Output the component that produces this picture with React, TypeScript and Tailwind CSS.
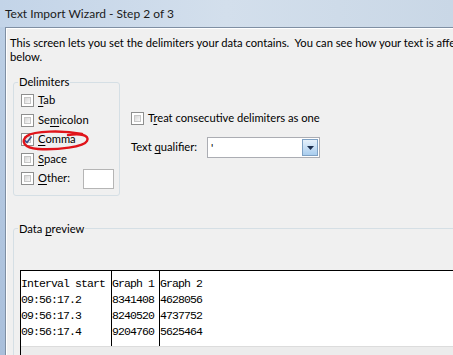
import React from 'react'

const ui = { fontFamily: 'Lato, "Liberation Sans", sans-serif' }
const mono = { fontFamily: '"Liberation Mono", "Noto Sans CJK SC", monospace' }

function Box({ checked = false }: { checked?: boolean }) {
  return (
    <span className="relative inline-block w-[13px] h-[13px] shrink-0 border border-[#8e8f8f] bg-white">
      <span className="absolute inset-[2px] border border-[#c6c6c6] bg-gradient-to-br from-[#d6d6d6] to-[#fafafa]" />
      {checked && (
        <svg className="absolute left-[1px] top-[1px]" width="10" height="10" viewBox="0 0 10 10">
          <path d="M1.5 5 L4 7.5 L8.5 1.5" fill="none" stroke="#3b4f8a" strokeWidth="1.6" />
        </svg>
      )}
    </span>
  )
}

function Check({ label, u, checked }: { label: string; u: number; checked?: boolean }) {
  return (
    <div className="flex items-center h-[19.5px] gap-[4px]">
      <Box checked={checked} />
      <span>
        {label.slice(0, u)}
        <span className="underline underline-offset-2">{label[u]}</span>
        {label.slice(u + 1)}
      </span>
    </div>
  )
}

const rows = [
  ['Interval start', 'Graph 1', 'Graph 2'],
  ['09:56:17.2', '8341408', '4628056'],
  ['09:56:17.3', '8240520', '4737752'],
  ['09:56:17.4', '9204760', '5625464'],
]

export default function App() {
  return (
    <div className="w-[453px] h-[355px] overflow-hidden bg-gradient-to-r from-[#c3d4e8] via-[#d3dfec] to-[#c9d7e6] text-[11.2px] text-black" style={ui}>
      <div className="h-[27px] pl-[5px] leading-[27px] text-[12px] text-[#1b1b1b]">Text Import Wizard - Step 2 of 3</div>
      <div className="flex h-[328px]">
        <div className="w-[5px] shrink-0 bg-gradient-to-b from-[#bccfe5] to-[#a9bfdb]" />
        <div className="w-[560px] shrink-0 border-l border-t border-[#7f8fa3] bg-[#f0f0f0] shadow-[inset_1px_1px_0_#ffffff]">
          <p className="pl-[4px] pt-[8px] leading-[14px] whitespace-pre">
            {'This screen lets you set the delimiters your data contains.  You can see how your text is affected in the preview'}
            <br />
            below.
          </p>

          <div className="flex mt-[10px] ml-[7px] gap-[11px]">
            <fieldset className="relative w-[107px] border border-[#d5dfe5] rounded-[3px] pl-[7px] pb-[6px]">
              <legend className="ml-[-3px] px-[1px] leading-[16px]">Delimiters</legend>
              <div className="mt-[1px]">
                <Check label="Tab" u={0} />
                <Check label="Semicolon" u={2} />
                <Check label="Comma" u={0} checked />
                <Check label="Space" u={0} />
                <div className="flex items-center h-[19.5px] gap-[4px]">
                  <Box />
                  <span>
                    <span className="underline underline-offset-2">O</span>ther:
                  </span>
                  <span className="ml-[9px] w-[31px] h-[20px] border border-[#b5b5b5] bg-white" />
                </div>
              </div>
              <svg className="absolute left-[4px] top-[39px]" width="76" height="24" viewBox="0 0 76 24">
                <path
                  d="M50 6 C62 4 72 6 69 12 C66 18 40 21 20 20 C6 19 2 12 9 7 C16 2 44 1 64 5"
                  fill="none"
                  stroke="#e0141a"
                  strokeWidth="2.4"
                  strokeLinecap="round"
                />
              </svg>
            </fieldset>

            <div className="pt-[34px]">
              <div className="flex items-center h-[20px] gap-[4px] whitespace-nowrap">
                <Box />
                <span>
                  T<span className="underline underline-offset-2">r</span>eat consecutive delimiters as one
                </span>
              </div>
              <div className="flex items-center mt-[9px]">
                <span className="w-[76px] whitespace-nowrap">
                  Text <span className="underline underline-offset-2">q</span>ualifier:
                </span>
                <div className="flex w-[113px] h-[21px] border border-[#abadb3] bg-white">
                  <span className="flex-1 pl-[3px] leading-[19px]">'</span>
                  <span className="flex items-center justify-center w-[16px] m-[1px] border border-[#7ea1c4] bg-gradient-to-b from-[#e6f1fb] to-[#a9cdee]">
                    <svg width="7" height="4" viewBox="0 0 7 4">
                      <path d="M0 0 H7 L3.5 4 Z" fill="#1c2f4f" />
                    </svg>
                  </span>
                </div>
              </div>
            </div>
          </div>

          <fieldset className="mt-[25px] ml-[7px] w-[520px] h-[140px] border border-[#d5dfe5] rounded-[3px]">
            <legend className="ml-[4px] px-[1px] leading-[16px]">
              Data <span className="underline underline-offset-2">p</span>review
            </legend>
            <div className="mt-[33px] ml-[6px] border border-black bg-white">
              <div className="flex h-[75px] text-[11.5px] tracking-[-0.9px] leading-[16px]" style={mono}>
                {[0, 1, 2].map((c) => (
                  <div
                    key={c}
                    className={c === 0 ? 'w-[91px] border-r border-black pt-[5px]' : c === 1 ? 'w-[48px] border-r border-black pt-[5px]' : 'flex-1 pt-[5px]'}
                  >
                    {rows.map((r, i) => (
                      <div key={i} className="h-[16px] whitespace-pre">
                        {r[c]}
                      </div>
                    ))}
                  </div>
                ))}
              </div>
              <div className="h-[12px] border-t border-[#dcdcdc] bg-[#ececec]" />
            </div>
          </fieldset>
        </div>
      </div>
    </div>
  )
}
